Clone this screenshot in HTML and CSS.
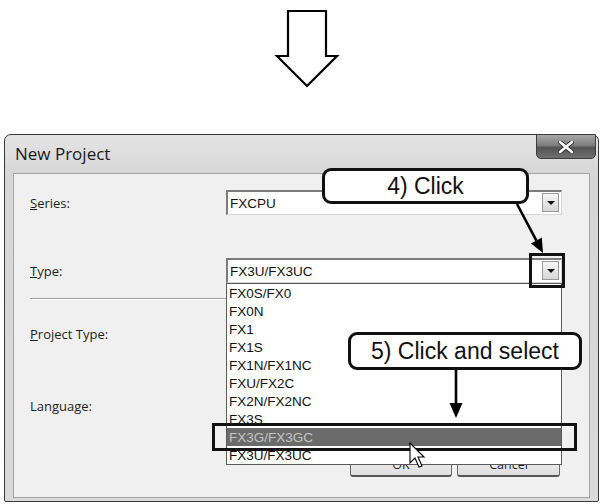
FILE: index.html
```html
<!DOCTYPE html>
<html lang="en">
  <head>
    <meta charset="UTF-8" />
    <meta name="viewport" content="width=device-width, initial-scale=1.0" />
    <title>New Project</title>
    <link rel="stylesheet" href="styles.css">
  </head>
  <body>
    <div class="page">
      <div class="top">
        <svg width="601" height="134" viewBox="0 0 601 134">
          <polygon points="288,11 326,11 326,56 337,56 307,86 277,56 288,56" fill="#fff" stroke="#000" stroke-width="2.2" />
        </svg>
      </div>

      <div class="dialog">
        <div class="titlebar">
          <span class="title">New Project</span>
          <div class="close">
            <svg width="16" height="12" viewBox="0 0 16 12">
              <path d="M2 1 L14 11 M14 1 L2 11" stroke="#333" stroke-width="4.5" stroke-linecap="round" />
              <path d="M2 1 L14 11 M14 1 L2 11" stroke="#fff" stroke-width="2.6" stroke-linecap="round" />
            </svg>
          </div>
        </div>

        <div class="panel">
          <div class="row">
            <label><u>S</u>eries:</label>
            <div class="combo"><span>FXCPU</span><i class="drop"></i></div>
          </div>
          <div class="row row-type">
            <label><u>T</u>ype:</label>
            <div class="combo"><span>FX3U/FX3UC</span><i class="drop"></i></div>
          </div>
          <div class="sep"></div>
          <div class="row row-proj">
            <label><u>P</u>roject Type:</label>
          </div>
          <div class="row row-lang">
            <label>Langua<u>g</u>e:</label>
          </div>
          <div class="buttons">
            <div class="btn btn-ok">OK</div>
            <div class="btn">Cancel</div>
          </div>

          <!-- open dropdown of the Type combo -->
          <ul class="list">
            <li>FX0S/FX0</li>
            <li>FX0N</li>
            <li>FX1</li>
            <li>FX1S</li>
            <li>FX1N/FX1NC</li>
            <li>FXU/FX2C</li>
            <li>FX2N/FX2NC</li>
            <li>FX3S</li>
            <li class="selected">FX3G/FX3GC</li>
            <li>FX3U/FX3UC</li>
          </ul>
        </div>
      </div>

      <div class="callout c4">4) Click</div>
      <div class="callout c5">5) Click and select</div>
      <div class="mark mark-btn"></div>
      <div class="mark mark-item"></div>

      <svg class="arrows" width="601" height="504" viewBox="0 0 601 504">
        <line x1="517" y1="204" x2="536.4" y2="240.6" stroke="#000" stroke-width="2.6" />
        <polygon points="531,243.6 541.8,237.6 543,253" fill="#000" />
        <line x1="456" y1="370" x2="456" y2="404" stroke="#000" stroke-width="2.6" />
        <polygon points="449.5,403 462.5,403 456,418" fill="#000" />
      </svg>

      <svg class="cursor" width="18" height="28" viewBox="0 0 18 28">
        <path d="M1 1 L1 21 L6 16 L10 25 L13 24 L9 15 L15 15 Z" fill="#fff" stroke="#000" stroke-width="1.1" />
      </svg>
    </div>
  </body>
</html>
```

FILE: styles.css
```css
body {
  margin: 0;
  padding: 0;
  background-color: #ffffff;
  font-family: "Liberation Sans", Arial, sans-serif;
}

.page {
  position: relative;
  width: 601px;
  height: 504px;
  overflow: hidden;
}

.top {
  height: 134px;
}

.top svg {
  display: block;
}

.dialog {
  margin-left: 4px;
  width: 595px;
  height: 368px;
  box-sizing: border-box;
  border: 1px solid #3a3a3a;
  border-radius: 7px 7px 2px 2px;
  background: linear-gradient(#e4e4e4, #d6d6d6 40px, #d9d9d9);
  display: flex;
  flex-direction: column;
}

.titlebar {
  position: relative;
  height: 38px;
  display: flex;
  align-items: center;
  padding-left: 10px;
  padding-bottom: 1px;
  box-sizing: border-box;
}

.title {
  font-family: "Open Sans", sans-serif;
  font-size: 17px;
  color: #1a1a1a;
}

.close {
  position: absolute;
  top: -1px;
  right: 2px;
  width: 60px;
  height: 25px;
  box-sizing: border-box;
  border: 1px solid #3c3c3c;
  border-radius: 0 0 5px 5px;
  background: linear-gradient(#a8a8a8, #7e7e7e 45%, #545454 55%, #707070);
  display: flex;
  justify-content: center;
  align-items: center;
}

.close svg {
  display: block;
}

.panel {
  position: relative;
  margin: 0 8px 3px 8px;
  flex: 1;
  border: 1px solid #a4a4a4;
  background-color: #f0f0f0;
  padding: 16px 27px 0 16px;
  font-family: "Open Sans", sans-serif;
  font-size: 13px;
  color: #1e1e1e;
}

.row {
  display: flex;
  align-items: center;
  height: 25px;
}

.row label {
  width: 196px;
  flex: none;
}

.row-type {
  margin-top: 43px;
}

.row-proj {
  margin-top: 21px;
}

.row-lang {
  margin-top: 47px;
}

.combo {
  position: relative;
  flex: 1;
  height: 25px;
  box-sizing: border-box;
  background-color: #ffffff;
  border: 1px solid #d4d4d4;
  border-top: 2px solid #7c7c7c;
  border-left: 2px solid #7c7c7c;
  display: flex;
  align-items: center;
  padding-left: 2px;
  font-family: "Liberation Sans", sans-serif;
  font-size: 13.5px;
  color: #111;
}

.drop {
  position: absolute;
  top: 1px;
  right: 2px;
  width: 17px;
  height: 19px;
  box-sizing: border-box;
  border: 1px solid #9a9a9a;
  background: linear-gradient(#f6f6f6, #d6d6d6);
  display: flex;
  justify-content: center;
  align-items: center;
}

.drop::after {
  content: "";
  border-left: 4px solid transparent;
  border-right: 4px solid transparent;
  border-top: 4px solid #111;
}

.sep {
  margin-top: 15px;
  border-top: 1px solid #a0a0a0;
  border-bottom: 1px solid #ffffff;
}

.buttons {
  margin-top: 34px;
  margin-right: 2px;
  display: flex;
  justify-content: flex-end;
  gap: 5px;
}

.btn {
  width: 103px;
  height: 25px;
  box-sizing: border-box;
  border: 1px solid #6a6a6a;
  border-bottom: 2px solid #555;
  border-radius: 3px;
  background: linear-gradient(#f4f4f4, #dedede);
  display: flex;
  justify-content: center;
  align-items: center;
  font-size: 12.5px;
}

.btn-ok {
  width: 102px;
}

.list {
  position: absolute;
  left: 212px;
  top: 109px;
  width: 336px;
  height: 182px;
  box-sizing: border-box;
  margin: 0;
  padding: 0;
  list-style: none;
  background-color: #ffffff;
  border: 1px solid #5a5a5a;
  font-family: "Liberation Sans", sans-serif;
  font-size: 13.5px;
  color: #111;
  overflow: hidden;
}

.list li {
  height: 18px;
  line-height: 20px;
  padding-left: 2px;
}

.list li.selected {
  background-color: #6b6b6b;
  color: #c4c4c4;
}

.callout {
  position: absolute;
  box-sizing: border-box;
  border: 3px solid #111;
  border-radius: 9px;
  background-color: #ffffff;
  display: flex;
  justify-content: center;
  align-items: center;
  font-family: "Liberation Sans", Arial, sans-serif;
  font-size: 23px;
  color: #111;
}

.c4 {
  left: 322px;
  top: 168px;
  width: 207px;
  height: 36px;
}

.c5 {
  left: 348px;
  top: 332px;
  width: 234px;
  height: 38px;
}

.mark {
  position: absolute;
  box-sizing: border-box;
  border: 3px solid #111;
}

.mark-btn {
  left: 529px;
  top: 253px;
  width: 36px;
  height: 35px;
}

.mark-item {
  left: 212px;
  top: 423px;
  width: 365px;
  height: 28px;
}

.arrows {
  position: absolute;
  left: 0;
  top: 0;
  pointer-events: none;
}

.cursor {
  position: absolute;
  left: 409px;
  top: 442px;
}
```
